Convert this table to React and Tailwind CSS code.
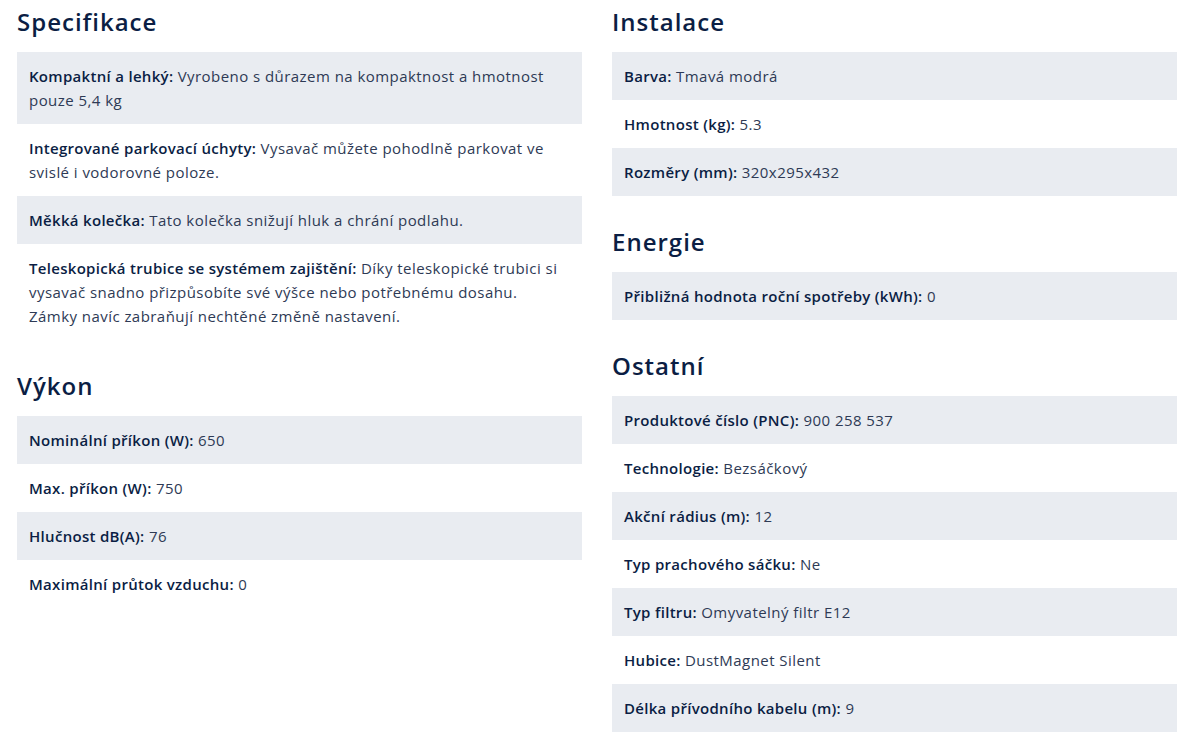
const left = [
  {
    title: 'Specifikace',
    rows: [
      ['Kompaktní a lehký:', 'Vyrobeno s důrazem na kompaktnost a hmotnost pouze 5,4 kg'],
      ['Integrované parkovací úchyty:', 'Vysavač můžete pohodlně parkovat ve svislé i vodorovné poloze.'],
      ['Měkká kolečka:', 'Tato kolečka snižují hluk a chrání podlahu.'],
      [
        'Teleskopická trubice se systémem zajištění:',
        'Díky teleskopické trubici si vysavač snadno přizpůsobíte své výšce nebo potřebnému dosahu. Zámky navíc zabraňují nechtěné změně nastavení.',
      ],
    ],
  },
  {
    title: 'Výkon',
    rows: [
      ['Nominální příkon (W):', '650'],
      ['Max. příkon (W):', '750'],
      ['Hlučnost dB(A):', '76'],
      ['Maximální průtok vzduchu:', '0'],
    ],
  },
];

const right = [
  {
    title: 'Instalace',
    rows: [
      ['Barva:', 'Tmavá modrá'],
      ['Hmotnost (kg):', '5.3'],
      ['Rozměry (mm):', '320x295x432'],
    ],
  },
  {
    title: 'Energie',
    rows: [['Přibližná hodnota roční spotřeby (kWh):', '0']],
  },
  {
    title: 'Ostatní',
    rows: [
      ['Produktové číslo (PNC):', '900 258 537'],
      ['Technologie:', 'Bezsáčkový'],
      ['Akční rádius (m):', '12'],
      ['Typ prachového sáčku:', 'Ne'],
      ['Typ filtru:', 'Omyvatelný filtr E12'],
      ['Hubice:', 'DustMagnet Silent'],
      ['Délka přívodního kabelu (m):', '9'],
    ],
  },
];

function Section({ title, rows }) {
  return (
    <section>
      <h2 className="mb-[14px] text-[24px] leading-8 font-semibold tracking-[1px] text-[#0b1e44]">{title}</h2>
      <div className="flex flex-col">
        {rows.map(([label, value], i) => (
          <div
            key={label}
            className={`px-3 py-3 text-[15px] leading-6 tracking-[0.45px] text-[#2e3a55] ${i % 2 === 0 ? 'bg-[#e9ecf1]' : ''}`}
          >
            <span className="font-semibold tracking-[0.3px] text-[#0b1e44]">{label}</span> {value}
          </div>
        ))}
      </div>
    </section>
  );
}

export default function App() {
  return (
    <div
      className="grid grid-cols-2 gap-x-[30px] pt-[6px] pl-[17px] pr-[10px] bg-white min-h-screen"
      style={{ fontFamily: '"Open Sans", "Noto Sans", sans-serif' }}
    >
      <div className="flex flex-col gap-[30px]">
        {left.map((s) => (
          <Section key={s.title} {...s} />
        ))}
      </div>
      <div className="flex flex-col gap-[30px]">
        {right.map((s) => (
          <Section key={s.title} {...s} />
        ))}
      </div>
    </div>
  );
}
